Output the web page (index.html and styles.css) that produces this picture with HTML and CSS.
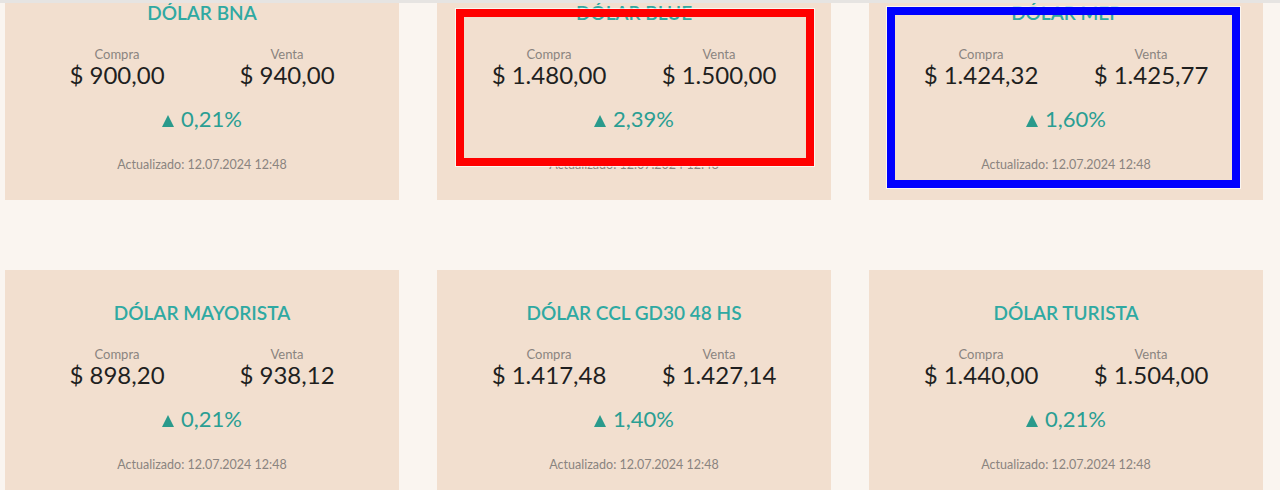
FILE: index.html
```html
<!DOCTYPE html>
<html lang="es">
<head>
    <meta charset="UTF-8">
    <meta name="viewport" content="width=device-width, initial-scale=1.0">
    <title>Cotizaciones del Dólar</title>
    <link rel="stylesheet" href="styles.css">
</head>
<body>

    <!-- Borde de la cabecera fija -->
    <div class="topbar"></div>

    <!-- Grilla de cotizaciones -->
    <div class="grid">
        <div class="card">
            <h3 class="card-title">DÓLAR BNA</h3>
            <div class="values">
                <div class="value"><span class="label">Compra</span><span class="price">$ 900,00</span></div>
                <div class="value"><span class="label">Venta</span><span class="price">$ 940,00</span></div>
            </div>
            <div class="variation"><span class="arrow"></span>0,21%</div>
            <div class="updated">Actualizado: 12.07.2024 12:48</div>
        </div>

        <div class="card">
            <h3 class="card-title">DÓLAR BLUE</h3>
            <div class="values">
                <div class="value"><span class="label">Compra</span><span class="price">$ 1.480,00</span></div>
                <div class="value"><span class="label">Venta</span><span class="price">$ 1.500,00</span></div>
            </div>
            <div class="variation"><span class="arrow"></span>2,39%</div>
            <div class="updated">Actualizado: 12.07.2024 12:48</div>
        </div>

        <div class="card">
            <h3 class="card-title">DÓLAR MEP</h3>
            <div class="values">
                <div class="value"><span class="label">Compra</span><span class="price">$ 1.424,32</span></div>
                <div class="value"><span class="label">Venta</span><span class="price">$ 1.425,77</span></div>
            </div>
            <div class="variation"><span class="arrow"></span>1,60%</div>
            <div class="updated">Actualizado: 12.07.2024 12:48</div>
        </div>

        <div class="card">
            <h3 class="card-title">DÓLAR MAYORISTA</h3>
            <div class="values">
                <div class="value"><span class="label">Compra</span><span class="price">$ 898,20</span></div>
                <div class="value"><span class="label">Venta</span><span class="price">$ 938,12</span></div>
            </div>
            <div class="variation"><span class="arrow"></span>0,21%</div>
            <div class="updated">Actualizado: 12.07.2024 12:48</div>
        </div>

        <div class="card">
            <h3 class="card-title">DÓLAR CCL GD30 48 HS</h3>
            <div class="values">
                <div class="value"><span class="label">Compra</span><span class="price">$ 1.417,48</span></div>
                <div class="value"><span class="label">Venta</span><span class="price">$ 1.427,14</span></div>
            </div>
            <div class="variation"><span class="arrow"></span>1,40%</div>
            <div class="updated">Actualizado: 12.07.2024 12:48</div>
        </div>

        <div class="card">
            <h3 class="card-title">DÓLAR TURISTA</h3>
            <div class="values">
                <div class="value"><span class="label">Compra</span><span class="price">$ 1.440,00</span></div>
                <div class="value"><span class="label">Venta</span><span class="price">$ 1.504,00</span></div>
            </div>
            <div class="variation"><span class="arrow"></span>0,21%</div>
            <div class="updated">Actualizado: 12.07.2024 12:48</div>
        </div>
    </div>

    <!-- Marcas de anotación -->
    <div class="mark mark-red"></div>
    <div class="mark mark-blue"></div>

</body>
</html>
```

FILE: styles.css
```css
/* Reset */
* {
    margin: 0;
    padding: 0;
    box-sizing: border-box;
}

body {
    font-family: 'Lato', 'Noto Sans', sans-serif;
    background-color: #faf5f0;
    color: #222;
    overflow: hidden;
    height: 490px;
    position: relative;
}

/* Borde de la cabecera */
.topbar {
    position: fixed;
    top: 0;
    left: 0;
    right: 0;
    height: 3px;
    background-color: #e6e4e2;
    z-index: 5;
}

/* Grilla */
.grid {
    display: grid;
    grid-template-columns: repeat(3, 394px);
    column-gap: 38px;
    row-gap: 70px;
    padding: 0 5px;
    margin-top: -30px;
}

.card {
    background-color: #f2dfcf;
    height: 230px;
    display: flex;
    flex-direction: column;
    align-items: center;
    padding-top: 31px;
}

.card-title {
    font-size: 19px;
    line-height: 24px;
    font-weight: 600;
    color: #2fa9a2;
}

.values {
    display: grid;
    grid-template-columns: 170px 170px;
    margin-top: 22px;
}

.value {
    display: flex;
    flex-direction: column;
    align-items: center;
}

.label {
    font-size: 13px;
    line-height: 15px;
    color: #8a8480;
}

.price {
    font-size: 24px;
    line-height: 25px;
    color: #1f1f1f;
}

.variation {
    margin-top: 20px;
    font-size: 22px;
    line-height: 24px;
    color: #2a9e93;
}

/* Triángulo de variación */
.arrow {
    display: inline-block;
    width: 0;
    height: 0;
    border-left: 6.5px solid transparent;
    border-right: 6.5px solid transparent;
    border-bottom: 12px solid #2a9a8c;
    margin-right: 7px;
}

.updated {
    margin-top: 27px;
    font-size: 12.5px;
    line-height: 14px;
    color: #8a8480;
}

/* Anotaciones */
.mark {
    position: absolute;
    box-shadow: 0 0 0 1px rgba(255, 255, 255, 0.7);
}

.mark-red {
    left: 456px;
    top: 9px;
    width: 358px;
    height: 157px;
    border: 8px solid #ff0000;
}

.mark-blue {
    left: 887px;
    top: 7px;
    width: 353px;
    height: 181px;
    border: 8px solid #0000ff;
}
```
